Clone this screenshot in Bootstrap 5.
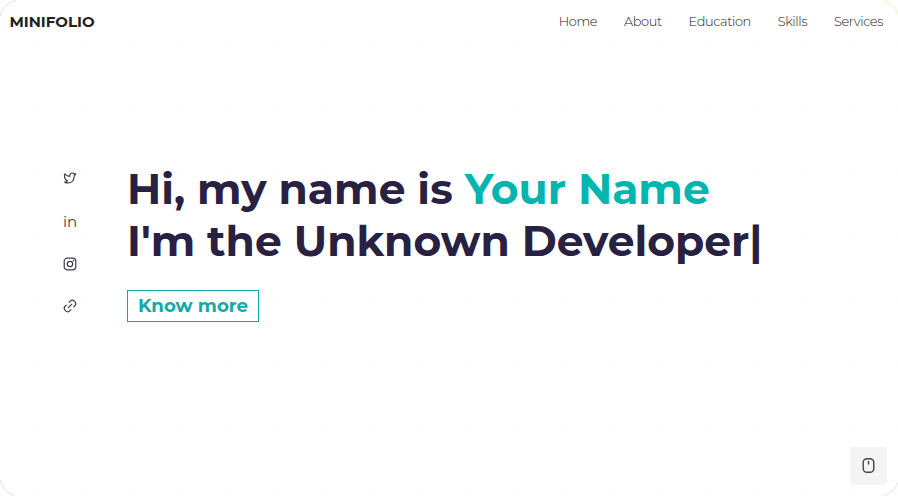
<!DOCTYPE html>
<html lang="en">
<head>
<meta charset="utf-8">
<meta name="viewport" content="width=device-width, initial-scale=1">
<title>Minifolio</title>
<link href="https://cdn.jsdelivr.net/npm/bootstrap@5.3.0/dist/css/bootstrap.min.css" rel="stylesheet">
<style>
body{font-family:Montserrat,Inter,"Open Sans",sans-serif;background:#fff;color:#302e33}
.brandname{font-size:15px;font-weight:700;color:#212121;margin-left:9.500px;line-height:20px}
.topbar{height:43px;padding:0 15px 0 0}
.topbar .nav-link{font-size:12.900px;color:#222;font-weight:300;line-height:20px;letter-spacing:-.36px}
.links{gap:26.800px;padding-top:1px}
.hero{margin-top:120px}
.social{width:127px;padding-left:63px;gap:28.700px;margin-top:8.200px}
.social svg{display:block}
.linkedin{font-size:15px;font-weight:400;line-height:15px;height:14px;color:#3f3c46;text-decoration:none}
h1{font-size:42.400px;font-weight:700;line-height:52px;color:#282142;margin:0;white-space:nowrap}
.teal{color:#04b4ae}
.more{border:1px solid #12aaa8;border-radius:0;color:#12aaa8;font-size:18.200px;font-weight:700;line-height:30px;width:132px;height:32px;padding:0;margin-top:23px}
.totop{right:11px;bottom:11px;width:37px;height:38px;background:#f4f4f4;border-radius:4px}
.frame{pointer-events:none;z-index:-1}
</style>
<script src="https://cdn.jsdelivr.net/npm/bootstrap@5.3.0/dist/js/bootstrap.bundle.min.js"></script>
</head>
<body class="position-relative vh-100 overflow-hidden">
<svg class="frame position-absolute top-0 start-0" width="898" height="496" fill="none">
<defs><pattern id="dots" x="12" y="11" width="48" height="64" patternUnits="userSpaceOnUse"><rect x="21" y="30" width="6" height="6" fill="#fcfefe"/></pattern></defs>
<rect width="898" height="496" fill="url(#dots)"/>
<path d="M0 17Q2 4 16 .5" stroke="#fbd5e0"/><path d="M882 .5Q895 3 897.500 14" stroke="#fbecc0"/><path d="M897.500 483Q894 493 884 495.500" stroke="#fddccb"/><path d="M.5 480Q3 492 14 495.500" stroke="#f7d3f5"/>
</svg>
<nav class="topbar d-flex align-items-center justify-content-between">
<a class="brandname text-decoration-none" href="#">MINIFOLIO</a>
<div class="links nav">
<a class="nav-link p-0" href="#">Home</a><a class="nav-link p-0" href="#">About</a><a class="nav-link p-0" href="#">Education</a><a class="nav-link p-0" href="#">Skills</a><a class="nav-link p-0" href="#">Services</a>
</div>
</nav>
<main class="hero d-flex">
<div class="social d-flex flex-column">
<svg width="14" height="14" viewBox="0 0 14 14" fill="none" stroke="#3f3c46" stroke-width="1.200" stroke-linejoin="round"><path d="M12.900 2.800L11.300 4.600C11.300 9.300 8.700 12 5.200 12C3.500 12 2.200 11.600 1.700 11C2.800 10.900 3.800 10.500 4.400 9.800C1.900 8.500 1.100 5.700 1.700 2.900C3.200 4.500 4.800 5.300 6.800 5.300C6.600 3.200 7.700 2 9.200 2C10.100 2 10.700 2.300 11.200 2.900Z"/></svg>
<a class="linkedin" href="#">in</a>
<svg width="14" height="14" viewBox="0 0 14 14" fill="none" stroke="#3f3c46" stroke-width="1.200"><rect x="1.200" y="1.200" width="11.600" height="11.600" rx="3"/><circle cx="7" cy="7" r="2.700"/><circle cx="10.400" cy="3.600" r=".8" fill="#3f3c46" stroke="none"/></svg>
<svg width="14" height="14" viewBox="0 0 24 24" fill="none" stroke="#3f3c46" stroke-width="2"><path d="M8.500 15.500l7-7M10 6l2-2a5.300 5.300 0 0 1 8 8l-2 2M14 18l-2 2a5.300 5.300 0 0 1-8-8l2-2"/></svg>
</div>
<div>
<h1>Hi, my name is <span class="teal">Your Name</span><br>I'm the Unknown Developer|</h1>
<a class="more btn" href="#">Know more</a>
</div>
</main>
<a class="totop position-absolute d-flex align-items-center justify-content-center" href="#" aria-label="Scroll"><svg width="14" height="16" viewBox="0 0 14 16" fill="none" stroke="#45434b" stroke-width="1.400" stroke-linecap="round"><rect x="1.200" y=".7" width="10.600" height="13.600" rx="3.800"/><path d="M6.500 3.500v2.500"/></svg></a>
</body>
</html>
